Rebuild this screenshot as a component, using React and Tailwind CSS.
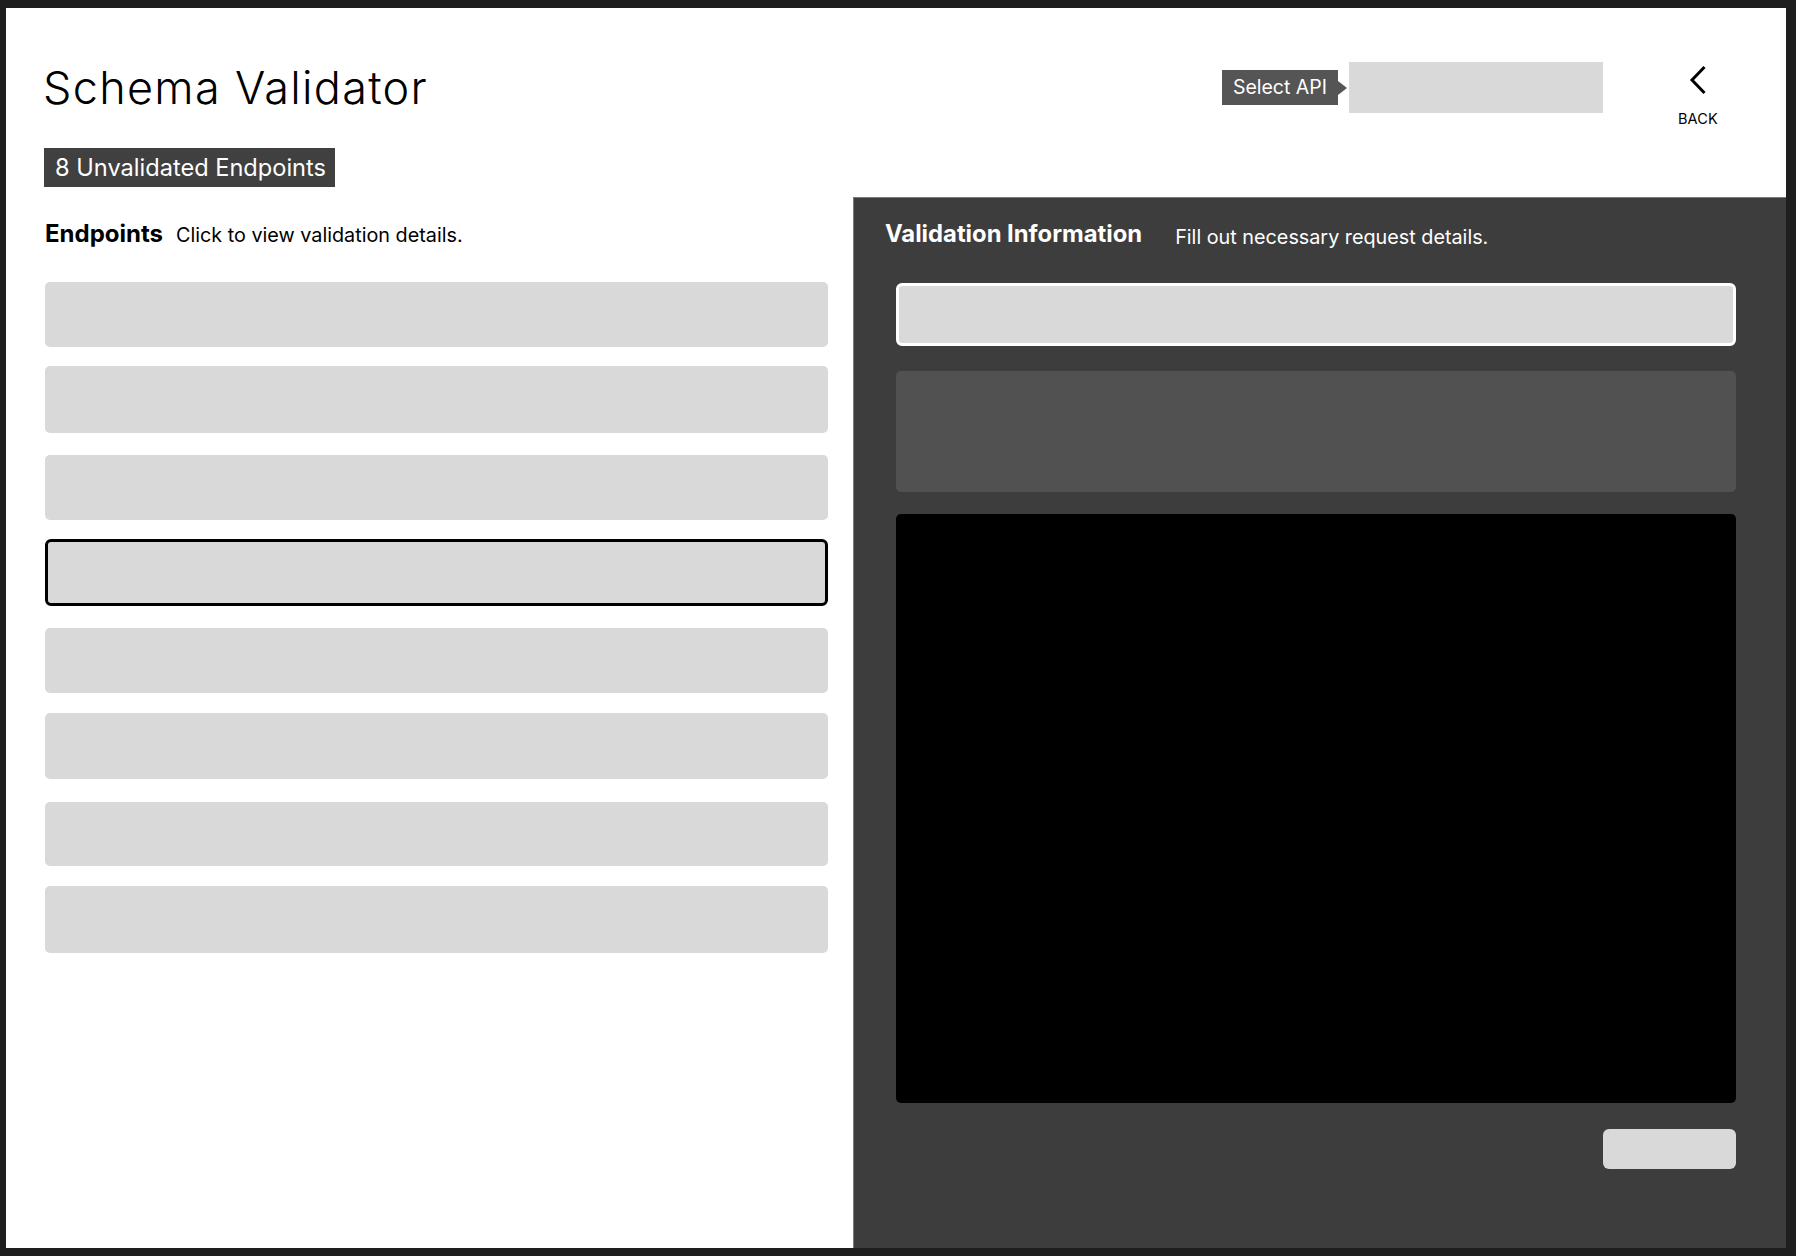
import React from "react";

const rows = [
  { cls: "h-[65px] mt-0" },
  { cls: "h-[67px] mt-[19px]" },
  { cls: "h-[65px] mt-[22px]" },
  { cls: "h-[67px] mt-[19px] border-[3px] border-black rounded-[6px]" },
  { cls: "h-[65px] mt-[22px]" },
  { cls: "h-[66px] mt-[20px]" },
  { cls: "h-[64px] mt-[23px]" },
  { cls: "h-[67px] mt-[20px]" },
];

export default function App() {
  return (
    <div
      className="w-[1796px] h-[1256px] bg-[#1e1e1e] pt-[8px] pl-[6px] overflow-hidden"
      style={{ fontFamily: "Inter, 'Noto Sans', 'Liberation Sans', sans-serif" }}
    >
      <div className="w-[1780px] h-[1240px] bg-white flex flex-col">
        {/* Header */}
        <header className="h-[189px] flex flex-row shrink-0">
          <div className="pl-[37px] pt-[58px] flex flex-col items-start">
            <h1 className="text-[45px] leading-[44px] font-light text-black tracking-[1.3px] whitespace-nowrap">
              Schema Validator
            </h1>
            <div className="ml-[1px] mt-[38px] h-[39px] bg-[#404040] text-white text-[23.6px] leading-[39px] pl-[11px] pr-[9px] whitespace-nowrap">
              8 Unvalidated Endpoints
            </div>
          </div>
          <div className="ml-auto flex flex-row items-start pr-[67px]">
            <div className="mt-[54px] flex flex-row items-center h-[51px]">
              <div className="h-[35px] bg-[#555555] text-white text-[19.5px] leading-[35px] px-[11px] whitespace-nowrap">
                Select API
              </div>
              <div className="w-0 h-0 border-y-[7px] border-y-transparent border-l-[9px] border-l-[#555555]" />
              <div className="ml-[2px] w-[254px] h-[51px] bg-[#d9d9d9]" />
            </div>
            <div className="ml-[74px] w-[42px] mt-[57px] flex flex-col items-center">
              <svg width="18" height="30" viewBox="0 0 18 30" fill="none">
                <path d="M15.5 2 L3 15 L15.5 28" stroke="#000" strokeWidth="3" strokeLinecap="butt" strokeLinejoin="miter" />
              </svg>
              <div className="mt-[16px] text-[14.5px] leading-[15px] text-black tracking-[0.2px]">BACK</div>
            </div>
          </div>
        </header>

        {/* Body */}
        <div className="flex flex-row flex-1 min-h-0">
          {/* Left column */}
          <div className="w-[847px] shrink-0 pl-[39px] pr-[25px] pt-[23px] flex flex-col">
            <div className="flex flex-row items-baseline h-[28px] leading-[28px] whitespace-nowrap">
              <span className="text-[24px] font-bold text-black">Endpoints</span>
              <span className="ml-[13px] text-[19.8px] text-black">Click to view validation details.</span>
            </div>
            <div className="mt-[34px] flex flex-col">
              {rows.map((r, i) => (
                <div key={i} className={`w-[783px] bg-[#d9d9d9] rounded-[5px] ${r.cls}`} />
              ))}
            </div>
          </div>

          {/* Right panel */}
          <div className="flex-1 bg-[#3d3d3d] border-l border-t border-[#7a7a7a] pt-[22px] flex flex-col">
            <div className="pl-[31px] flex flex-row items-baseline h-[28px] leading-[28px] whitespace-nowrap">
              <span className="text-[23.8px] font-bold text-white">Validation Information</span>
              <span className="ml-[33px] text-[19.8px] text-white relative top-[2px]">Fill out necessary request details.</span>
            </div>
            <div className="pl-[42px] pr-[50px] mt-[35px] flex flex-col">
              <div className="h-[63px] bg-[#d9d9d9] border-[3px] border-white rounded-[6px]" />
              <div className="mt-[25px] h-[121px] bg-[#525152] rounded-[5px]" />
              <div className="mt-[22px] h-[589px] bg-black rounded-[5px]" />
              <div className="mt-[26px] self-end w-[133px] h-[40px] bg-[#d9d9d9] rounded-[6px]" />
            </div>
          </div>
        </div>
      </div>
    </div>
  );
}
